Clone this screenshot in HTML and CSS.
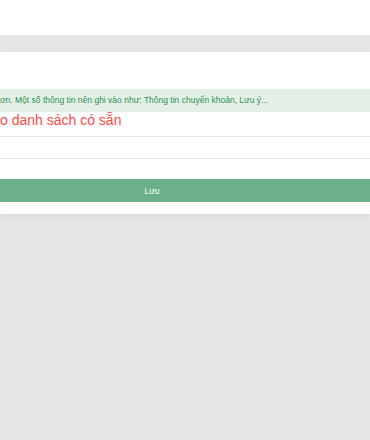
FILE: index.html
```html
<!DOCTYPE html>
<html lang="vi">
<head>
  <meta charset="UTF-8">
  <meta name="viewport" content="width=device-width, initial-scale=1.0">
  <title>Ghi chú</title>
  <link rel="stylesheet" href="styles.css">
</head>
<body>
  <!-- Top bar -->
  <header class="topbar"></header>

  <!-- Note panel -->
  <div class="panel">
    <p class="hint">ơn. Một số thông tin nên ghi vào như: Thông tin chuyển khoản, Lưu ý...</p>

    <div class="row row-pick">o danh sách có sẵn</div>
    <div class="row"></div>

    <button type="button" class="save-button">Lưu</button>
  </div>
</body>
</html>
```

FILE: styles.css
```css
:root {
  --green: #6caf89;
  --hint-bg: #e4efe8;
  --hint-text: #2c9150;
  --line: #e6e6e6;
  --page: #e6e6e6;
}

* {
  margin: 0;
  padding: 0;
  box-sizing: border-box;
}

body {
  font-family: 'Liberation Sans', Arial, sans-serif;
  background: var(--page);
  min-height: 100vh;
  overflow: hidden;
}

/* Top bar */
.topbar {
  height: 35px;
  background: white;
  margin-bottom: 17px;
}

/* Panel */
.panel {
  background: white;
  padding: 37px 0 12px;
  box-shadow: 0 2px 6px rgba(0, 0, 0, 0.06);
}

.hint {
  height: 23px;
  line-height: 23px;
  background: var(--hint-bg);
  color: var(--hint-text);
  font-size: 8.5px;
  white-space: nowrap;
}

.row {
  height: 22px;
  border-bottom: 1px solid var(--line);
}

.row-pick {
  height: 25px;
  color: #ff4a4a;
  font-size: 14px;
  line-height: 17px;
}

.save-button {
  display: block;
  width: 100%;
  height: 23px;
  margin-top: 20px;
  padding-right: 66px;
  background: var(--green);
  color: white;
  border: none;
  font-family: inherit;
  font-size: 8.5px;
  cursor: pointer;
}
```
